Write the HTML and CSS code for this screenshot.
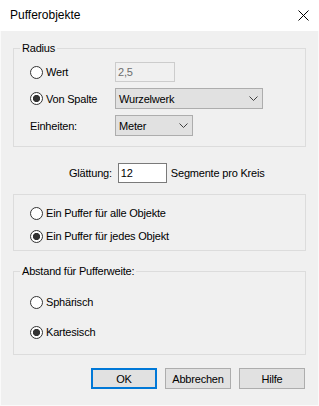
FILE: index.html
```html
<!DOCTYPE html>
<html lang="de">
<head>
    <meta charset="UTF-8">
    <meta name="viewport" content="width=device-width, initial-scale=1.0">
    <title>Pufferobjekte</title>
    <link rel="stylesheet" href="styles.css">
</head>
<body>
    <div class="window">
        <div class="titlebar">
            <span class="title">Pufferobjekte</span>
            <svg class="close" width="11" height="11" viewBox="0 0 11 11">
                <path d="M0.5 0.5 L10.5 10.5 M10.5 0.5 L0.5 10.5" stroke="#000" stroke-width="1" fill="none"/>
            </svg>
        </div>

        <div class="client">
            <!-- Radius -->
            <fieldset class="group">
                <legend>Radius</legend>
                <div class="radius-body">
                    <label class="radio"><span class="mark"></span>Wert</label>
                    <input class="edit" type="text" value="2,5" disabled>

                    <label class="radio"><span class="mark on"></span>Von Spalte</label>
                    <div class="combo combo-wide">
                        <span>Wurzelwerk</span>
                        <svg width="9" height="5" viewBox="0 0 9 5"><polyline points="0.5,0.5 4.5,4.5 8.5,0.5" fill="none" stroke="#404040" stroke-width="1"/></svg>
                    </div>

                    <span class="label">Einheiten:</span>
                    <div class="combo combo-short">
                        <span>Meter</span>
                        <svg width="9" height="5" viewBox="0 0 9 5"><polyline points="0.5,0.5 4.5,4.5 8.5,0.5" fill="none" stroke="#404040" stroke-width="1"/></svg>
                    </div>
                </div>
            </fieldset>

            <div class="smooth-row">
                <span>Glättung:</span>
                <input class="edit edit-white" type="text" value="12">
                <span>Segmente pro Kreis</span>
            </div>

            <!-- Puffer pro Objekt -->
            <fieldset class="group">
                <div class="radio-list list-objects">
                    <label class="radio"><span class="mark"></span>Ein Puffer für alle Objekte</label>
                    <label class="radio"><span class="mark on"></span>Ein Puffer für jedes Objekt</label>
                </div>
            </fieldset>

            <!-- Abstand -->
            <fieldset class="group group-distance">
                <legend>Abstand für Pufferweite:</legend>
                <div class="radio-list list-distance">
                    <label class="radio"><span class="mark"></span>Sphärisch</label>
                    <label class="radio"><span class="mark on"></span>Kartesisch</label>
                </div>
            </fieldset>

            <div class="buttons">
                <button class="btn btn-default">OK</button>
                <button class="btn">Abbrechen</button>
                <button class="btn">Hilfe</button>
            </div>
        </div>
    </div>
</body>
</html>
```

FILE: styles.css
```css
body {
    margin: 0;
    font-family: "Liberation Sans", Arial, sans-serif;
    font-size: 11px;
    letter-spacing: -0.2px;
    color: #000;
    background: #f0f0f0;
}

.window {
    width: 319px;
    height: 406px;
    display: flex;
    flex-direction: column;
}

.titlebar {
    height: 31px;
    flex: none;
    background: #fff;
    display: flex;
    align-items: center;
    justify-content: space-between;
    padding: 0 10px 0 10px;
}

.title {
    font-size: 12px;
    letter-spacing: 0;
    margin-top: -1px;
}

.close {
    margin-top: -1px;
}

.client {
    flex: 1;
    background: #f0f0f0;
    border: 1px solid #fafafa;
    border-top: 0;
    padding: 11px 12px 0 12px;
}

/* group boxes */
.group {
    margin: 0;
    padding: 0;
    min-width: 0;
    border: 1px solid #dcdcdc;
}

.group legend {
    margin-left: 6px;
    padding: 0 2px;
    line-height: 13px;
}

.radius-body {
    display: grid;
    grid-template-columns: 85px auto;
    grid-template-rows: 20px 21px 21px;
    row-gap: 6px;
    align-items: center;
    justify-items: start;
    padding: 7px 0 10px 16px;
}

.radio {
    display: flex;
    align-items: center;
    gap: 3px;
    height: 16px;
}

.mark {
    width: 13px;
    height: 13px;
    box-sizing: border-box;
    border: 1px solid #333;
    border-radius: 50%;
    background: #fff;
}

.mark.on {
    background: radial-gradient(circle, #333 0 3.3px, #fff 3.9px);
}

.edit {
    box-sizing: border-box;
    width: 60px;
    height: 20px;
    margin: 0;
    padding: 0 2px;
    font: inherit;
    letter-spacing: inherit;
    border: 1px solid #cccccc;
    background: #f0f0f0;
    color: #6d6d6d;
    outline: none;
}

.edit:disabled {
    color: #6d6d6d;
    -webkit-text-fill-color: #6d6d6d;
}

.edit-white {
    width: 49px;
    border-color: #7a7a7a;
    background: #fff;
    color: #000;
}

.combo {
    height: 21px;
    box-sizing: border-box;
    border: 1px solid #adadad;
    background: #e1e1e1;
    display: flex;
    align-items: center;
    justify-content: space-between;
    padding: 0 4px 0 3px;
}

.combo-wide {
    width: 148px;
}

.combo-short {
    width: 78px;
}

.smooth-row {
    display: flex;
    align-items: center;
    height: 20px;
    margin: 16px 0 11px 0;
    padding-left: 56px;
}

.smooth-row .edit {
    margin: 0 4px 0 6px;
}

.radio-list {
    display: flex;
    flex-direction: column;
    padding-left: 16px;
}

.list-objects {
    gap: 7px;
    padding-top: 10px;
    padding-bottom: 6px;
}

.group-distance {
    margin-top: 14px;
}

.list-distance {
    gap: 14px;
    padding-top: 16px;
    padding-bottom: 14px;
}

.buttons {
    display: flex;
    justify-content: flex-end;
    gap: 8px;
    margin-top: 13px;
    padding-right: 1px;
}

.btn {
    width: 66px;
    height: 21px;
    margin: 0;
    padding: 0;
    font: inherit;
    letter-spacing: inherit;
    color: #000;
    background: #e1e1e1;
    border: 1px solid #adadad;
}

.btn-default {
    border: 2px solid #0078d7;
}
```
